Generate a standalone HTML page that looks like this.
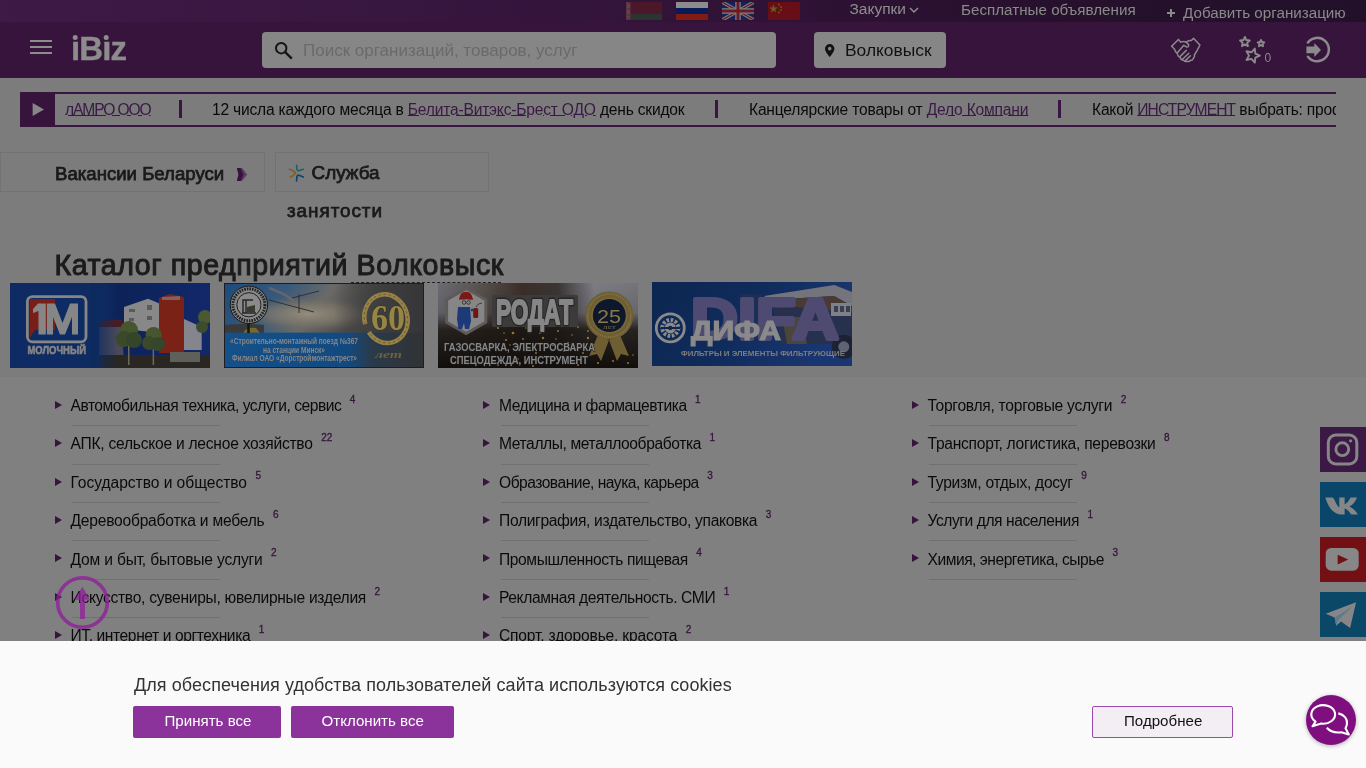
<!DOCTYPE html>
<html><head><meta charset="utf-8">
<style>
*{box-sizing:border-box;margin:0;padding:0}
html,body{width:1366px;height:768px;overflow:hidden;background:#808080;font-family:"Liberation Sans",sans-serif;color:#111;-webkit-font-smoothing:antialiased}
#root{position:absolute;left:0;top:0;width:1366px;height:768px;will-change:transform}
.abs{position:absolute}
svg{position:absolute;overflow:visible}
#top{left:0;top:0;width:1366px;height:22px;background:linear-gradient(90deg,#3e1a46 0%,#37163f 30%,#301236 55%,#26102c 80%,#22102a 100%)}
#hdr{left:0;top:22px;width:1366px;height:56px;background:#36143c}
.tt{font-size:15px;color:#8a8a8a;white-space:nowrap;line-height:1}
#band{left:0;top:78px;width:1366px;height:299px;background:#7c7c7c}
.txt{white-space:nowrap;line-height:1}
.tk{position:absolute;top:102px;font-size:15.6px;letter-spacing:-0.2px;line-height:1;white-space:nowrap;color:#0a0a0a}
.tk a{color:#3a1a45;text-decoration:underline;text-underline-offset:0px}
.sep{position:absolute;top:100px;width:3px;height:18px;background:#3a1442}
.li{position:absolute;font-size:15.6px;letter-spacing:-0.3px;line-height:1;white-space:nowrap;color:#0a0a0a}
.li i{position:absolute;left:-15.8px;top:2.8px;width:0;height:0;border-left:7.5px solid #36143c;border-top:4.2px solid transparent;border-bottom:4.2px solid transparent}
.li sup{position:absolute;font-size:10px;letter-spacing:0;color:#36143c;top:-3.5px;margin-left:8.5px;font-style:normal;line-height:1;-webkit-text-stroke:0.3px #36143c}
.hr{position:absolute;width:148px;height:1px;background:#707070}
</style></head><body><div id="root">
<div id="top" class="abs"></div>
<div id="hdr" class="abs"></div>
<div id="band" class="abs"></div>

<!-- TOPBAR -->
<svg style="left:626px;top:2px;overflow:hidden" width="180" height="18"><defs><clipPath id="ukc"><rect x="96" y="0" width="32" height="18"/></clipPath></defs>
 <rect x="0" y="0" width="36" height="12" fill="#4a1828"/>
 <rect x="0" y="12" width="36" height="6" fill="#2a3430"/>
 <rect x="0" y="0" width="4.5" height="18" fill="#5a3440"/>
 <path d="M1,2 L3.5,4 L1,6 M1,8 L3.5,10 L1,12 M1,14 L3.5,16" stroke="#7a5a60" stroke-width="0.8" fill="none"/>
 <rect x="50" y="0" width="32" height="6" fill="#8c8c8c"/>
 <rect x="50" y="6" width="32" height="6" fill="#0a1a58"/>
 <rect x="50" y="12" width="32" height="6" fill="#801c12"/>
 <rect x="96" y="0" width="32" height="18" fill="#15205a"/>
 <g clip-path="url(#ukc)">
 <path d="M96,0 L128,18 M128,0 L96,18" stroke="#7a7a7a" stroke-width="3.5"/>
 <path d="M96,0 L128,18 M128,0 L96,18" stroke="#6a1a24" stroke-width="1.2"/>
 <path d="M112,0 L112,18 M96,9 L128,9" stroke="#7e7e7e" stroke-width="5.5"/>
 <path d="M112,0 L112,18 M96,9 L128,9" stroke="#6a1a24" stroke-width="3"/></g>
 <rect x="142" y="0" width="32" height="18" fill="#680e16"/>
 <path d="M147.5,2.5 L148.6,5.6 L151.8,5.6 L149.2,7.5 L150.2,10.6 L147.5,8.7 L144.8,10.6 L145.8,7.5 L143.2,5.6 L146.4,5.6Z" fill="#6a5c1a"/>
 <g fill="#6a5c1a"><circle cx="153" cy="2.5" r="0.9"/><circle cx="155" cy="5" r="0.9"/><circle cx="155" cy="8" r="0.9"/><circle cx="153" cy="10.5" r="0.9"/></g>
</svg>
<div class="abs tt" style="left:849.5px;top:1.2px;font-size:15.5px;color:#8e8e8e">Закупки</div>
<svg style="left:905px;top:0" width="20" height="20"><path d="M5,8 L9,12 L13,8" fill="none" stroke="#8e8e8e" stroke-width="1.5"/></svg>
<div class="abs tt" style="left:961px;top:2.3px;font-size:15.2px">Бесплатные объявления</div>
<svg style="left:1160px;top:5px" width="20" height="16"><path d="M7,8 L15,8 M11,4 L11,12" stroke="#8a8a8a" stroke-width="2"/></svg>
<div class="abs tt" style="left:1183px;top:5.3px;font-size:15.2px">Добавить организацию</div>

<!-- HEADER -->
<div class="abs" style="left:30px;top:40px;width:22px;height:2px;background:#8c8c8c"></div>
<div class="abs" style="left:30px;top:46px;width:22px;height:2px;background:#8c8c8c"></div>
<div class="abs" style="left:30px;top:52px;width:22px;height:2px;background:#8c8c8c"></div>
<div class="abs txt" style="left:71px;top:32.4px;font-size:33px;letter-spacing:-0.9px;font-weight:bold;color:#8c8c8c;-webkit-text-stroke:0.4px #8c8c8c">ıBız</div>
<svg style="left:0;top:0" width="140" height="70"><circle cx="75.2" cy="37.4" r="2.5" fill="#8c8c8c"/><circle cx="106.2" cy="37.4" r="2.5" fill="#8c8c8c"/></svg>
<div class="abs" style="left:262px;top:32px;width:514px;height:36px;border-radius:4px;background:#868686"></div>
<div class="abs txt" style="left:303px;top:42px;font-size:17px;color:#6a6a6a">Поиск организаций, товаров, услуг</div>
<div class="abs" style="left:814px;top:32px;width:132px;height:36px;border-radius:4px;background:#868686"></div>
<div class="abs txt" style="left:845px;top:41.5px;font-size:17.4px;color:#111">Волковыск</div>

<!-- ICONS -->
<svg style="left:0;top:0" width="1366" height="80">
 <circle cx="281.2" cy="48.2" r="5.2" fill="none" stroke="#151515" stroke-width="2"/>
 <line x1="285.2" y1="52.2" x2="291.8" y2="58.6" stroke="#151515" stroke-width="2.4"/>
 <path d="M829.7,44 a4.7,4.7 0 0 1 4.7,4.7 c0,3 -4.7,8.3 -4.7,8.3 c0,0 -4.7,-5.3 -4.7,-8.3 a4.7,4.7 0 0 1 4.7,-4.7z M829.7,46.8 a1.8,1.8 0 1 0 0.01,0z" fill="#111" fill-rule="evenodd"/>
 <g transform="translate(1165,30)" fill="none" stroke="#8a8a8a" stroke-width="1.5" stroke-linejoin="round" stroke-linecap="round">
  <path d="M6.7,16.3 L13.4,9.4 L15.8,12.2 Q19,10.6 21.2,12.2 L23.6,14.6 Q24,17.2 21.4,16.9 L18.8,15.3 L12.4,22.8"/>
  <path d="M6.7,16.3 L9.6,19.2 Q10,22.2 12.5,24 Q13,27 15.2,27.5 Q16,30.2 18.6,30.2 Q20,32 22.2,31.2 Q24.2,32 25.6,30.2 Q27.6,30.6 28.4,28.2 Q30,27 29.4,25 L32.6,19.6 L34.9,15.1 L28.5,8.2 L26.4,10.6 Q23.5,10 21.2,12.2"/>
  <path d="M15,26.6 L21.3,20.4 M17.8,29 L23.8,23.2 M20.6,30.4 L25.4,25.8"/>
 </g>
 <g transform="translate(1232,30)" fill="none" stroke="#8a8a8a" stroke-width="1.9" stroke-linejoin="round">
  <path d="M12.90,6.90 L14.31,10.06 L17.75,10.42 L15.18,12.74 L15.90,16.13 L12.90,14.40 L9.90,16.13 L10.62,12.74 L8.05,10.42 L11.49,10.06 Z"/>
  <path d="M29.00,9.90 L30.00,12.02 L32.33,12.32 L30.62,13.93 L31.06,16.23 L29.00,15.10 L26.94,16.23 L27.38,13.93 L25.67,12.32 L28.00,12.02 Z"/>
  <path d="M27.90,25.60 L23.33,27.66 L22.79,32.64 L19.42,28.93 L14.51,29.95 L17.00,25.60 L14.51,21.25 L19.42,22.27 L22.79,18.56 L23.33,23.54 Z"/>
 </g>
 <text x="1264.5" y="62" font-family="Liberation Sans" font-size="12" fill="#8a8a8a">0</text>
 <path d="M1307.9,42.4 A11.7,11.7 0 1 1 1307.9,56.7" fill="none" stroke="#8a8a8a" stroke-width="2.5" stroke-linecap="round"/>
 <path d="M1306.4,46.6 L1314.3,46.6 L1314.3,43.1 L1321,50 L1314.3,57 L1314.3,53.3 L1306.4,53.3 Z" fill="#8a8a8a"/>
</svg>

<!-- TICKER -->
<div class="abs" style="left:20px;top:92px;width:1316px;height:35px;border:2px solid #3a1442;border-right:none;overflow:hidden">
</div>
<div class="abs" style="left:20px;top:92px;width:35px;height:35px;background:#36143c"></div>
<svg style="left:0;top:0" width="60" height="130"><path d="M32.6,103 L44,109.5 L32.6,116 Z" fill="#868686"/></svg>
<div class="abs" style="left:55px;top:94px;width:1281px;height:31px;overflow:hidden">
 <div class="tk" style="left:10px;top:7.6px"><a style="letter-spacing:-1.1px">лАМРО ООО</a></div>
 <div class="sep" style="left:124px;top:6px"></div>
 <div class="tk" style="left:157px;top:7.6px">12 числа каждого месяца в <a>Белита-Витэкс-Брест ОДО</a> день скидок</div>
 <div class="sep" style="left:660px;top:6px"></div>
 <div class="tk" style="left:694px;top:7.6px">Канцелярские товары от <a>Дело Компани</a></div>
 <div class="sep" style="left:1003px;top:6px"></div>
 <div class="tk" style="left:1037px;top:7.6px">Какой <a style="letter-spacing:-0.9px">ИНСТРУМЕНТ</a> выбрать: профессиональный</div>
</div>

<!-- VACANCIES -->
<div class="abs" style="left:0;top:152px;width:265px;height:40px;border:1px solid #727272"></div>
<div class="abs txt" style="left:55px;top:164.5px;font-size:18.6px;-webkit-text-stroke:0.75px #1a1a1a;color:#1a1a1a">Вакансии Беларуси</div>
<svg style="left:225px;top:160px" width="30" height="30"><path d="M11.9,8 L17,8 L22.1,14.5 L17,20.9 L11.9,20.9 L13.5,14.5Z" fill="#5a3a62"/><path d="M11.9,8 L15.5,8 L18.5,14.5 L15.5,20.9 L11.9,20.9 L13.5,14.5Z" fill="#36143c"/></svg>
<div class="abs" style="left:275px;top:152px;width:214px;height:40px;border:1px solid #727272"></div>
<svg style="left:280px;top:158px" width="40" height="30" fill="none" stroke-width="1.6" stroke-linecap="round">
 <path d="M9.4,11.3 Q14,12.5 15.4,15 Q14,17.8 10.4,19.1" stroke="#8a5a1e"/>
 <path d="M16.6,7.2 L16.9,11.5 Q17.6,13.3 19.5,12.6 L23.4,11.3" stroke="#186462"/>
 <path d="M16.6,23 L16.9,18.6 Q17.5,16.6 19.5,17.4 L23.4,18.9" stroke="#0a4470"/>
</svg>
<div class="abs txt" style="left:311.5px;top:163.5px;font-size:18.9px;-webkit-text-stroke:0.75px #1a1a1a;color:#1a1a1a">Служба</div>
<div class="abs txt" style="left:287px;top:201.5px;font-size:18.9px;-webkit-text-stroke:0.75px #1a1a1a;letter-spacing:0.95px;color:#1a1a1a">занятости</div>

<div class="abs txt" style="left:54.5px;top:250.6px;font-size:28.6px;letter-spacing:0.55px;-webkit-text-stroke:1px #1c1c1c;color:#1c1c1c">Каталог предприятий Волковыск</div>
<div class="abs" style="left:351px;top:282px;width:150px;border-top:1px dashed #222"></div>

<!-- BANNERS -->
<svg style="left:10px;top:283px;overflow:hidden" width="200" height="85" font-family="Liberation Sans" font-weight="bold">
 <defs>
  <linearGradient id="b1g" x1="0" x2="1" y1="0" y2="0"><stop offset="0" stop-color="#0e2c64"/><stop offset="0.45" stop-color="#0e2c62"/><stop offset="0.55" stop-color="#0c2258"/><stop offset="1" stop-color="#12286a"/></linearGradient>
  <filter id="b1blur" x="-10%" y="-10%" width="120%" height="120%"><feGaussianBlur stdDeviation="0.7"/></filter>
  <linearGradient id="b1f" x1="0" x2="1"><stop offset="0" stop-color="#0d2a5e" stop-opacity="1"/><stop offset="1" stop-color="#0d2a5e" stop-opacity="0"/></linearGradient>
 </defs>
 <rect width="200" height="85" fill="url(#b1g)"/>
 <g filter="url(#b1blur)"><path d="M89,40 L112,38 L114,85 L89,85Z" fill="#4a4a5a"/>
 <path d="M89,38 L112,36 L114,44 L89,44Z" fill="#4a1a22"/>
 <path d="M114,24 L138,15.8 L150.6,21 L150.6,50 L114,46Z" fill="#888888"/>
 <g fill="#5a5a5a"><rect x="119" y="26" width="6" height="3"/><rect x="137" y="22" width="5" height="5"/><rect x="137" y="33" width="5" height="4"/><rect x="119" y="35" width="5" height="3"/></g>
 <path d="M149,15 L160,11 L174,14 L174,70 L149,70Z" fill="#7a2218"/>
 <path d="M152,14 L170,13 L170,17 L152,17Z" fill="#8a8a8a" opacity="0.6"/>
 <path d="M174,36 L191.7,44 L191.7,67 L174,67Z" fill="#85858e"/>
 <rect x="89" y="72" width="111" height="13" fill="#2c2622"/>
 <rect x="160" y="69" width="30" height="10" fill="#5e605a"/>
 <rect x="118" y="60" width="1.5" height="22" fill="#6a6a5a"/>
 <rect x="142.6" y="64" width="1.5" height="18" fill="#6a6a5a"/>
 <circle cx="119" cy="47" r="9" fill="#44542e"/>
 <circle cx="114" cy="56" r="8" fill="#3a4a2a"/>
 <circle cx="124" cy="57" r="8" fill="#34442a"/>
 <circle cx="143.6" cy="52" r="8" fill="#46562e"/>
 <circle cx="139" cy="60" r="7" fill="#3a4a2a"/>
 <circle cx="148" cy="61" r="7" fill="#36462a"/>
 <circle cx="195" cy="34" r="7" fill="#4a5a32"/>
 <circle cx="192" cy="44" r="6" fill="#3e4c2e"/>
 </g>
 <rect x="80" y="0" width="28" height="85" fill="url(#b1f)"/>
 <rect x="17.4" y="13.6" width="58.6" height="45.2" rx="5" fill="#0e2c64" stroke="#868686" stroke-width="2.8"/>
 <path d="M19.6,16 L45,16 L45,47 L25,47 L19.6,55 Z" fill="#7a1e1a"/>
 <path d="M23,26 L28,20.4 L35.8,20.4 L35.8,51.5 L28.5,51.5 L28.5,28 L23,30Z" fill="#868686"/>
 <path d="M36.9,20.4 L45,20.4 L52.5,40 L60,20.4 L68,20.4 L68,51.5 L62,51.5 L62,34 L55,51.5 L50,51.5 L43,34 L43,51.5 L36.9,51.5Z" fill="#868686"/>
 <text x="17.5" y="71" font-size="11.5" fill="#868686" stroke="#868686" stroke-width="0.6" textLength="58.5" lengthAdjust="spacingAndGlyphs">МОЛОЧНЫЙ</text>
</svg>
<svg style="left:224px;top:283px;overflow:hidden" width="200" height="85" font-family="Liberation Sans" font-weight="bold">
 <defs>
  <linearGradient id="b2g" x1="0" x2="1" y1="0" y2="0.35"><stop offset="0" stop-color="#1c4a7c"/><stop offset="0.3" stop-color="#3a5a7a"/><stop offset="0.5" stop-color="#6a6a68"/><stop offset="0.72" stop-color="#4e4c48"/><stop offset="0.85" stop-color="#444444"/><stop offset="1" stop-color="#3c3c3e"/></linearGradient>
  <radialGradient id="b2r" cx="0.42" cy="0.62" r="0.35"><stop offset="0" stop-color="#948c7c" stop-opacity="1"/><stop offset="0.6" stop-color="#7c766a" stop-opacity="0.7"/><stop offset="1" stop-color="#6a665e" stop-opacity="0"/></radialGradient>
  <linearGradient id="b2s" x1="0" x2="1"><stop offset="0" stop-color="#14508a"/><stop offset="0.62" stop-color="#124a80"/><stop offset="0.74" stop-color="#2a3a4a"/><stop offset="1" stop-color="#323234"/></linearGradient>
  <linearGradient id="b2d" x1="0" x2="1"><stop offset="0" stop-color="#3c3c3e" stop-opacity="0"/><stop offset="0.55" stop-color="#3e3e40" stop-opacity="0"/><stop offset="0.75" stop-color="#3e3e40" stop-opacity="0.9"/><stop offset="1" stop-color="#363638" stop-opacity="1"/></linearGradient>
 </defs>
 <rect width="200" height="85" fill="url(#b2g)"/>
 <rect width="200" height="50" fill="url(#b2r)"/>
 <path d="M45,5 Q60,10 70,18" stroke="#7a6a64" stroke-width="2.5" fill="none" opacity="0.7"/>
 <path d="M45,17 L90,29 M75,11 L75,30 M68,15 L95,8" stroke="#2a2a2e" stroke-width="0.9" fill="none"/>
 <path d="M0,42 Q20,40 40,42 L40,50 L0,50Z" fill="#3a3a38"/>
 <path d="M19,50 Q22,44 32,45 L36,50Z" fill="#7a6a28"/>
 <rect width="200" height="85" fill="url(#b2d)"/>
 <rect x="0" y="49.6" width="200" height="35.4" fill="url(#b2s)"/>
 <rect x="23.2" y="38" width="2.6" height="12" fill="#181818"/>
 <circle cx="24.9" cy="21.8" r="18.7" fill="#888888" stroke="#151515" stroke-width="1"/>
 <circle cx="24.9" cy="21.8" r="16" fill="none" stroke="#222" stroke-width="3" stroke-dasharray="1.6 1"/>
 <circle cx="24.9" cy="21.8" r="12.1" fill="#8a8a8a" stroke="#1e1e1e" stroke-width="1"/>
 <path d="M19,30 L19,17 L29,17 M22,17 L22,30 M18,30 L32,30" stroke="#262626" stroke-width="1.4" fill="none"/>
 <path d="M23,24 L31,22 L31,29 L23,29Z" fill="#3a3a30"/>
 <ellipse cx="162" cy="35.7" rx="21.5" ry="24.5" fill="none" stroke="#968246" stroke-width="4.5" stroke-dasharray="135 25" transform="rotate(165 162 35.7)"/>
 <ellipse cx="162" cy="35.7" rx="21.5" ry="24.5" fill="none" stroke="#5a4a20" stroke-width="0.8" stroke-dasharray="2 3" transform="rotate(165 162 35.7)"/>
 <text x="147" y="46.5" font-family="Liberation Serif" font-size="35" fill="#968646" stroke="#3a3220" stroke-width="1.2" paint-order="stroke" textLength="34" lengthAdjust="spacingAndGlyphs">60</text>
 <text x="151" y="75" font-family="Liberation Serif" font-style="italic" font-size="10" fill="#6e6236" textLength="27" lengthAdjust="spacingAndGlyphs">лет</text>
 <g fill="#878787" font-size="8.4">
  <text x="6" y="61" textLength="128" lengthAdjust="spacingAndGlyphs">«Строительно-монтажный поезд №367</text>
  <text x="39" y="69.5" textLength="62" lengthAdjust="spacingAndGlyphs">на станции Минск»</text>
  <text x="8" y="78" textLength="125" lengthAdjust="spacingAndGlyphs">Филиал ОАО «Дорстроймонтажтрест»</text>
 </g>
 <rect x="0.5" y="0.5" width="199" height="84" fill="none" stroke="#1e1e1e" stroke-width="1"/>
</svg>
<svg style="left:438px;top:283px;overflow:hidden" width="200" height="85" font-family="Liberation Sans" font-weight="bold">
 <defs>
  <linearGradient id="b3g" x1="0" x2="1"><stop offset="0" stop-color="#6c6c76"/><stop offset="0.2" stop-color="#5a5450"/><stop offset="0.42" stop-color="#3c2e28"/><stop offset="0.6" stop-color="#3a3634"/><stop offset="0.78" stop-color="#7c7c84"/><stop offset="1" stop-color="#74747a"/></linearGradient>
  <linearGradient id="b3v" x1="0" y1="0" x2="0" y2="1"><stop offset="0" stop-color="#181410" stop-opacity="0"/><stop offset="0.35" stop-color="#181410" stop-opacity="0.15"/><stop offset="0.55" stop-color="#181410" stop-opacity="0.85"/><stop offset="1" stop-color="#120e0c" stop-opacity="1"/></linearGradient>
 </defs>
 <rect width="200" height="85" fill="url(#b3g)"/>
 <rect width="200" height="85" fill="url(#b3v)"/>
 <g fill="#9a7430"><circle cx="72" cy="62" r="0.8"/><circle cx="98" cy="70" r="0.9"/><circle cx="112" cy="74" r="0.8"/><circle cx="126" cy="68" r="1"/><circle cx="134" cy="52" r="0.8"/><circle cx="145" cy="70" r="0.9"/><circle cx="88" cy="45" r="0.8"/><circle cx="102" cy="50" r="0.9"/><circle cx="118" cy="56" r="0.8"/><circle cx="160" cy="66" r="0.9"/><circle cx="175" cy="78" r="1"/><circle cx="195" cy="72" r="0.8"/><circle cx="108" cy="80" r="0.8"/><circle cx="80" cy="76" r="0.8"/><circle cx="150" cy="48" r="0.9"/><circle cx="66" cy="50" r="0.8"/><circle cx="60" cy="45" r="1"/><circle cx="75" cy="50" r="1.3"/><circle cx="90" cy="47" r="1"/><circle cx="105" cy="55" r="1.2"/><circle cx="120" cy="48" r="1"/><circle cx="130" cy="60" r="1"/><circle cx="150" cy="55" r="1.2"/><circle cx="60" cy="82" r="0.9"/><circle cx="95" cy="83" r="1"/><circle cx="140" cy="82" r="1"/><circle cx="160" cy="80" r="1.1"/><circle cx="185" cy="66" r="1"/><circle cx="115" cy="62" r="1"/><circle cx="85" cy="56" r="0.9"/><circle cx="140" cy="44" r="0.9"/><circle cx="68" cy="57" r="1"/><circle cx="190" cy="80" r="1"/><circle cx="155" cy="62" r="1"/></g>
 <path d="M28.2,5.5 L47.8,16.8 L47.8,39.2 L28.2,50.5 L8.6,39.2 L8.6,16.8 Z" fill="#868686" stroke="#5e5a5a" stroke-width="3"/>
 <path d="M21.4,15.8 Q22,8.8 28,8.8 Q34,8.8 34.4,15.8Z" fill="#7a1a16"/>
 <rect x="21" y="15" width="14" height="1.6" fill="#7a1a16"/>
 <ellipse cx="28" cy="20.5" rx="5.5" ry="4" fill="#8c8c8c"/>
 <circle cx="26" cy="19.5" r="1.8" fill="none" stroke="#222" stroke-width="0.8"/>
 <circle cx="30.5" cy="19.5" r="1.8" fill="none" stroke="#222" stroke-width="0.8"/>
 <path d="M20,24 L32,24 L33,38 L31,46 L27,46 L26,40 L24,46 L20.5,46 L19,36Z" fill="#1c3a78"/>
 <rect x="35.2" y="25" width="5" height="10" rx="1.5" fill="#6e1814"/>
 <path d="M33,27 L36,27" stroke="#1c3a78" stroke-width="2.5"/>
 <path d="M38,24 Q40,20 44,20" stroke="#2a2a2a" stroke-width="0.8" fill="none"/>
 <rect x="54" y="12" width="86" height="32" rx="2" fill="#3c3a3a"/>
 <text x="58" y="40.5" font-size="35" fill="none" stroke="#262626" stroke-width="5" stroke-linejoin="round" textLength="77" lengthAdjust="spacingAndGlyphs">РОДАТ</text>
 <text x="58" y="40.5" font-size="35" fill="#868686" stroke="#868686" stroke-width="2" stroke-linejoin="round" textLength="77" lengthAdjust="spacingAndGlyphs">РОДАТ</text>
 <circle cx="171.3" cy="32.5" r="24" fill="#6e5e34"/>
 <circle cx="171.3" cy="32.5" r="21.5" fill="none" stroke="#8a7a48" stroke-width="1.4" stroke-dasharray="1 1"/>
 <circle cx="171.3" cy="32.5" r="18" fill="#7a683a"/>
 <circle cx="171.3" cy="32.5" r="16.5" fill="#0e182c"/>
 <text x="159" y="39.5" font-size="18" font-weight="normal" fill="#8a7846" textLength="24" lengthAdjust="spacingAndGlyphs">25</text>
 <text x="165" y="46" font-family="Liberation Serif" font-size="5" font-weight="normal" fill="#867444" textLength="13" lengthAdjust="spacingAndGlyphs">ЛЕТ</text>
 <path d="M160,52 L151,73 L159,71 L163,78 L171,57Z M182,52 L191,73 L183,71 L179,78 L171,57Z" fill="#6e5e32"/>
 <g fill="#868686" stroke="#1e1e1e" stroke-width="1.2" paint-order="stroke" font-size="11">
  <text x="6" y="67.5" textLength="151" lengthAdjust="spacingAndGlyphs">ГАЗОСВАРКА, ЭЛЕКТРОСВАРКА</text>
  <text x="12" y="80.5" textLength="138" lengthAdjust="spacingAndGlyphs">СПЕЦОДЕЖДА, ИНСТРУМЕНТ</text>
 </g>
</svg>
<svg style="left:652px;top:282px;overflow:hidden" width="200" height="84" font-family="Liberation Sans" font-weight="bold">
 <defs>
  <linearGradient id="b4g" x1="0" x2="1" y1="0" y2="0.3"><stop offset="0" stop-color="#0c2650"/><stop offset="0.55" stop-color="#102c5c"/><stop offset="1" stop-color="#1a3670"/></linearGradient>
 </defs>
 <rect width="200" height="84" fill="url(#b4g)"/>
 <path d="M112,14 L182.4,3 L200,10 L200,24 L182,14 L118,18Z" fill="#74747c"/>
 <path d="M118,18 L182,14 L200,24 L200,30 L130,24Z" fill="#4a3a34"/>
 <path d="M120,24 L200,30 L200,62 L130,62Z" fill="#2a3048" opacity="0.85"/>
 <rect x="179" y="21" width="20" height="13" fill="#7e808a"/>
 <g fill="#3a4050"><rect x="182" y="24" width="4" height="6"/><rect x="188" y="24" width="4" height="6"/><rect x="194" y="24" width="4" height="6"/></g>
 <path d="M130,35 L150,35 L155,62 L135,62Z" fill="#5a5030" opacity="0.7"/>
 <circle cx="191.8" cy="64.8" r="12" fill="#1c2232"/>
 <circle cx="191.8" cy="64.8" r="5.5" fill="#5e6474"/>
 <rect x="88" y="12" width="22" height="45" fill="#243050" opacity="0.6"/>
 <text x="39" y="57" font-size="57" fill="#4e4a72" stroke="#4e4a72" stroke-width="4" stroke-linejoin="round" textLength="148" lengthAdjust="spacingAndGlyphs">DIFA</text>
 <circle cx="18.3" cy="45.9" r="14" fill="none" stroke="#8a8a8a" stroke-width="2.8"/>
 <circle cx="18.3" cy="45.9" r="8" fill="none" stroke="#8a8a8a" stroke-width="4" stroke-dasharray="2.6 1.6"/>
 <circle cx="18.3" cy="45.9" r="5.5" fill="#8a8a8a"/>
 <rect x="9" y="45" width="19" height="2" fill="#0c2650"/>
 <circle cx="18.3" cy="45.9" r="2.2" fill="#0c2650"/>
 <text x="39" y="58" font-size="27" fill="#8a8a8a" stroke="#8a8a8a" stroke-width="1.2" textLength="90" lengthAdjust="spacingAndGlyphs">ДИФА</text>
 <text x="29" y="74" font-size="8" fill="#7e7e7e" textLength="164" lengthAdjust="spacingAndGlyphs">ФИЛЬТРЫ И ЭЛЕМЕНТЫ ФИЛЬТРУЮЩИЕ</text>
</svg>

<!-- LIST -->
<div class="li" style="left:70.5px;top:398.0px;letter-spacing:-0.479px"><i></i>Автомобильная техника, услуги, сервис<sup>4</sup></div>
<div class="hr" style="left:72.0px;top:425.2px"></div>
<div class="li" style="left:70.5px;top:436.4px;letter-spacing:-0.242px"><i></i>АПК, сельское и лесное хозяйство<sup>22</sup></div>
<div class="hr" style="left:72.0px;top:463.6px"></div>
<div class="li" style="left:70.5px;top:474.8px;letter-spacing:-0.041px"><i></i>Государство и общество<sup>5</sup></div>
<div class="hr" style="left:72.0px;top:502.0px"></div>
<div class="li" style="left:70.5px;top:513.2px;letter-spacing:-0.224px"><i></i>Деревообработка и мебель<sup>6</sup></div>
<div class="hr" style="left:72.0px;top:540.4px"></div>
<div class="li" style="left:70.5px;top:551.6px;letter-spacing:-0.187px"><i></i>Дом и быт, бытовые услуги<sup>2</sup></div>
<div class="hr" style="left:72.0px;top:578.8px"></div>
<div class="li" style="left:70.5px;top:590.0px;letter-spacing:-0.286px"><i></i>Искусство, сувениры, ювелирные изделия<sup>2</sup></div>
<div class="hr" style="left:72.0px;top:617.2px"></div>
<div class="li" style="left:70.5px;top:628.4px;letter-spacing:-0.408px"><i></i>ИТ, интернет и оргтехника<sup>1</sup></div>
<div class="hr" style="left:72.0px;top:655.6px"></div>
<div class="li" style="left:499px;top:398.0px;letter-spacing:-0.462px"><i></i>Медицина и фармацевтика<sup>1</sup></div>
<div class="hr" style="left:500.5px;top:425.2px"></div>
<div class="li" style="left:499px;top:436.4px;letter-spacing:-0.392px"><i></i>Металлы, металлообработка<sup>1</sup></div>
<div class="hr" style="left:500.5px;top:463.6px"></div>
<div class="li" style="left:499px;top:474.8px;letter-spacing:-0.504px"><i></i>Образование, наука, карьера<sup>3</sup></div>
<div class="hr" style="left:500.5px;top:502.0px"></div>
<div class="li" style="left:499px;top:513.2px;letter-spacing:-0.331px"><i></i>Полиграфия, издательство, упаковка<sup>3</sup></div>
<div class="hr" style="left:500.5px;top:540.4px"></div>
<div class="li" style="left:499px;top:551.6px;letter-spacing:-0.406px"><i></i>Промышленность пищевая<sup>4</sup></div>
<div class="hr" style="left:500.5px;top:578.8px"></div>
<div class="li" style="left:499px;top:590.0px;letter-spacing:-0.392px"><i></i>Рекламная деятельность. СМИ<sup>1</sup></div>
<div class="hr" style="left:500.5px;top:617.2px"></div>
<div class="li" style="left:499px;top:628.4px;letter-spacing:-0.182px"><i></i>Спорт, здоровье, красота<sup>2</sup></div>
<div class="hr" style="left:500.5px;top:655.6px"></div>
<div class="li" style="left:927.5px;top:398.0px;letter-spacing:-0.268px"><i></i>Торговля, торговые услуги<sup>2</sup></div>
<div class="hr" style="left:929.0px;top:425.2px"></div>
<div class="li" style="left:927.5px;top:436.4px;letter-spacing:-0.262px"><i></i>Транспорт, логистика, перевозки<sup>8</sup></div>
<div class="hr" style="left:929.0px;top:463.6px"></div>
<div class="li" style="left:927.5px;top:474.8px;letter-spacing:-0.288px"><i></i>Туризм, отдых, досуг<sup>9</sup></div>
<div class="hr" style="left:929.0px;top:502.0px"></div>
<div class="li" style="left:927.5px;top:513.2px;letter-spacing:-0.431px"><i></i>Услуги для населения<sup>1</sup></div>
<div class="hr" style="left:929.0px;top:540.4px"></div>
<div class="li" style="left:927.5px;top:551.6px;letter-spacing:-0.475px"><i></i>Химия, энергетика, сырье<sup>3</sup></div>
<div class="hr" style="left:929.0px;top:578.8px"></div>

<!-- SOCIAL -->
<div class="abs" style="left:1320px;top:427px;width:46px;height:45px;background:#3c1845"></div>
<div class="abs" style="left:1320px;top:482px;width:46px;height:45px;background:#0a466a"></div>
<div class="abs" style="left:1320px;top:537px;width:46px;height:45px;background:#721014"></div>
<div class="abs" style="left:1320px;top:592px;width:46px;height:45px;background:#0b4868"></div>
<svg style="left:0;top:0" width="1366" height="768">
 <rect x="1328.3" y="435.1" width="28.5" height="28.8" rx="7.5" fill="none" stroke="#868686" stroke-width="3"/>
 <circle cx="1342.3" cy="449.2" r="6.4" fill="none" stroke="#868686" stroke-width="2.9"/>
 <circle cx="1350.6" cy="440.8" r="1.6" fill="#868686"/>
 <path d="M1325.3,497.5 L1331.6,497.5 Q1333.5,497.5 1334.3,499.6 Q1337,506 1339.3,507.6 L1339.3,497.5 L1344.6,497.5 L1344.6,504.6 Q1348.4,502.5 1350.6,497.5 L1357,497.5 Q1355,503.5 1349.4,506.6 Q1355.2,509.5 1357.8,514.5 L1351.2,514.5 Q1348.4,509.6 1344.6,508.4 L1344.6,514.5 L1341.8,514.5 Q1330.4,514.5 1325.3,497.5 Z" fill="#868686"/>
 <rect x="1325.7" y="548" width="33" height="22.7" rx="5.5" fill="#878787"/>
 <path d="M1337.7,554.7 L1348.2,559.6 L1337.7,564.4 Z" fill="#721014"/>
 <path d="M1325.7,613.8 L1356.1,602.2 L1350.1,628 L1341,621.5 L1336.2,625.8 L1334.6,617.6 Z" fill="#868686"/>
 <path d="M1334.6,617.6 L1352.5,606.5 L1338.5,619.8 L1336.2,625.8 Z" fill="#5a7a90"/>
</svg>

<!-- COOKIE -->
<div class="abs" style="left:0;top:641px;width:1366px;height:127px;background:#fafafa"></div>
<div class="abs txt" style="left:134px;top:676px;font-size:18px;letter-spacing:0.07px;color:#333">Для обеспечения удобства пользователей сайта используются cookies</div>
<div class="abs" style="left:133px;top:706px;width:148px;height:32px;border-radius:2px;background:#8b339b"></div>
<div class="abs txt" style="left:164.5px;top:713.3px;font-size:15.1px;color:#fff">Принять все</div>
<div class="abs" style="left:291px;top:706px;width:163px;height:32px;border-radius:2px;background:#8b339b"></div>
<div class="abs txt" style="left:321.5px;top:713.3px;font-size:15.1px;color:#fff">Отклонить все</div>
<div class="abs" style="left:1092px;top:706px;width:141px;height:32px;border-radius:2px;background:#f3edf4;border:1px solid #9b4aab"></div>
<div class="abs txt" style="left:1124px;top:713.3px;font-size:15.1px;color:#111">Подробнее</div>
<div class="abs" style="left:1306px;top:695px;width:50px;height:50px;border-radius:50%;background:#7f0f7f;box-shadow:0 1px 4px rgba(0,0,0,.3)"></div>
<svg style="left:1300px;top:690px" width="62" height="60" fill="none" stroke="#fff" stroke-width="2.1" stroke-linejoin="round">
 <path d="M15.6,31.6 L12.5,36.3 L21.1,33.6 A11.9,9.3 0 1 0 15.6,31.6 Z"/>
 <path d="M38.3,23.4 C44,24.6 47.6,28.8 47,33.5 C46.8,35.5 46.2,37 45.5,38.3 L48.8,44.5 L41.4,42.2 C35.5,43 30,41.5 26.8,37.8"/>
</svg>
<svg style="left:40px;top:560px" width="100" height="100">
 <circle cx="42.5" cy="42.5" r="24.8" fill="none" stroke="#901f9b" stroke-opacity="0.78" stroke-width="3.6"/>
 <path d="M34.5,39.7 L42.4,26.7 L50,39.7 Z M40,39.5 L45,39.5 L45,58.9 L40,58.9 Z" fill="#901f9b" fill-opacity="0.75"/>
</svg>
</div></body></html>
